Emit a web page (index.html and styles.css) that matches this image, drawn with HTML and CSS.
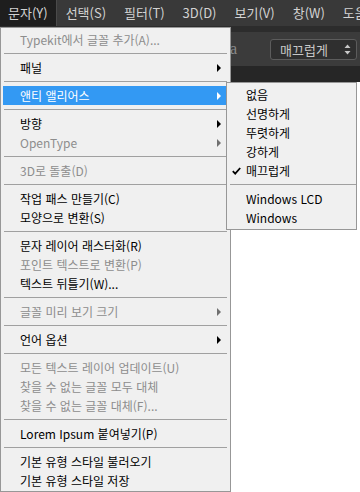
FILE: index.html
```html
<!DOCTYPE html>
<html lang="ko">
<head>
    <meta charset="UTF-8">
    <meta name="viewport" content="width=device-width, initial-scale=1.0">
    <title>문자 메뉴</title>
    <link rel="stylesheet" href="styles.css">
</head>
<body>
    <div class="menubar">
        <div class="menubar-item active">문자(Y)</div>
        <div class="menubar-item">선택(S)</div>
        <div class="menubar-item">필터(T)</div>
        <div class="menubar-item">3D(D)</div>
        <div class="menubar-item">보기(V)</div>
        <div class="menubar-item">창(W)</div>
        <div class="menubar-item">도움</div>
    </div>

    <div class="toolbar">
        <div class="toolbar-gap"></div>
        <div class="options">
            <span class="aa-label">a</span>
            <div class="select">
                <span>매끄럽게</span>
                <svg class="select-arrows" width="7" height="11" viewBox="0 0 7 11">
                    <path d="M3.5 0.5 L6.5 4 L0.5 4 Z M3.5 10.5 L6.5 7 L0.5 7 Z" fill="#c8c8c8"/>
                </svg>
            </div>
        </div>
        <div class="toolbar-dark"></div>
    </div>

    <!-- main dropdown -->
    <div class="menu">
        <div class="item disabled">Typekit에서 글꼴 추가(A)...</div>
        <div class="sep"></div>
        <div class="item sub">패널</div>
        <div class="sep"></div>
        <div class="item sub selected">앤티 앨리어스</div>
        <div class="sep"></div>
        <div class="item sub">방향</div>
        <div class="item sub disabled">OpenType</div>
        <div class="sep"></div>
        <div class="item disabled">3D로 돌출(D)</div>
        <div class="sep"></div>
        <div class="item">작업 패스 만들기(C)</div>
        <div class="item">모양으로 변환(S)</div>
        <div class="sep"></div>
        <div class="item">문자 레이어 래스터화(R)</div>
        <div class="item disabled">포인트 텍스트로 변환(P)</div>
        <div class="item">텍스트 뒤틀기(W)...</div>
        <div class="sep"></div>
        <div class="item sub disabled">글꼴 미리 보기 크기</div>
        <div class="sep"></div>
        <div class="item sub">언어 옵션</div>
        <div class="sep"></div>
        <div class="item disabled">모든 텍스트 레이어 업데이트(U)</div>
        <div class="item disabled">찾을 수 없는 글꼴 모두 대체</div>
        <div class="item disabled">찾을 수 없는 글꼴 대체(F)...</div>
        <div class="sep"></div>
        <div class="item">Lorem Ipsum 붙여넣기(P)</div>
        <div class="sep"></div>
        <div class="item">기본 유형 스타일 불러오기</div>
        <div class="item">기본 유형 스타일 저장</div>
    </div>

    <!-- anti-alias submenu -->
    <div class="submenu">
        <div class="item">없음</div>
        <div class="item">선명하게</div>
        <div class="item">뚜렷하게</div>
        <div class="item">강하게</div>
        <div class="item checked">
            <svg class="check" width="9" height="8" viewBox="0 0 9 8">
                <path d="M0.8 4.2 L3.2 6.6 L8.2 1" fill="none" stroke="#000" stroke-width="1.8"/>
            </svg>
            매끄럽게
        </div>
        <div class="sep"></div>
        <div class="item">Windows LCD</div>
        <div class="item">Windows</div>
    </div>
</body>
</html>
```

FILE: styles.css
```css
body {
    margin: 0;
    width: 360px;
    height: 492px;
    overflow: hidden;
    background-color: #ffffff;
    font-family: "Noto Sans CJK KR", "Noto Sans", sans-serif;
    font-size: 12px;
    position: relative;
}

/* top menu bar */
.menubar {
    height: 26px;
    display: flex;
    overflow: hidden;
    background-color: #393939;
    color: #d2d2d2;
    font-size: 13px;
    white-space: nowrap;
}
.menubar-item {
    padding: 0 9px;
    line-height: 25px;
}
.menubar-item.active {
    padding-left: 8px;
    background-color: #1e1e1e;
    box-shadow: inset -1px 0 0 #4a4a4a;
}

/* options bar behind the menus */
.toolbar-gap {
    height: 6px;
    background-color: #2c2c2c;
}
.options {
    height: 34px;
    background-color: #3b3b3b;
    display: flex;
    align-items: center;
    justify-content: flex-end;
    padding-right: 3px;
}
.toolbar-dark {
    height: 16px;
    background-color: #262626;
}
.aa-label {
    font-family: "Liberation Serif", serif;
    font-size: 16px;
    color: #8a8a8a;
    margin-right: 33px;
}
.select {
    width: 87px;
    height: 21px;
    box-sizing: border-box;
    border: 1px solid #5c5c5c;
    border-radius: 3px;
    background-color: #2f2f2f;
    color: #c8c8c8;
    font-size: 13px;
    display: flex;
    align-items: center;
    justify-content: space-between;
    padding: 0 5px 0 9px;
}

/* dropdown menus */
.menu,
.submenu {
    position: absolute;
    background-color: #f0f0f0;
    border: 1px solid #979797;
    box-sizing: border-box;
    color: #000;
}
.menu {
    left: 0;
    top: 27px;
    width: 231px;
    padding: 2px 0 1px;
}
.submenu {
    left: 226px;
    top: 82px;
    width: 131px;
    padding: 2px 0 2px;
}
.item {
    position: relative;
    height: 19px;
    line-height: 19px;
    margin: 0 2px;
    padding-left: 17px;
    white-space: nowrap;
}
.submenu .item {
    margin: 0;
    padding-left: 19px;
}
.item.disabled {
    color: #8d8d8d;
}
.item.selected {
    background-color: #3399f3;
    color: #ffffff;
}
.item.sub::after {
    content: "";
    position: absolute;
    right: 7px;
    top: 6px;
    border-left: 4px solid #000;
    border-top: 4px solid transparent;
    border-bottom: 4px solid transparent;
}
.item.sub.disabled::after {
    border-left-color: #707070;
}
.item.sub.selected::after {
    border-left-color: #ffffff;
}
.check {
    position: absolute;
    left: 5px;
    top: 6px;
}
.sep {
    height: 1px;
    background-color: #a0a0a0;
    margin: 4px 3px;
}
.submenu .sep {
    margin: 4px 0 4px 3px;
}
```
